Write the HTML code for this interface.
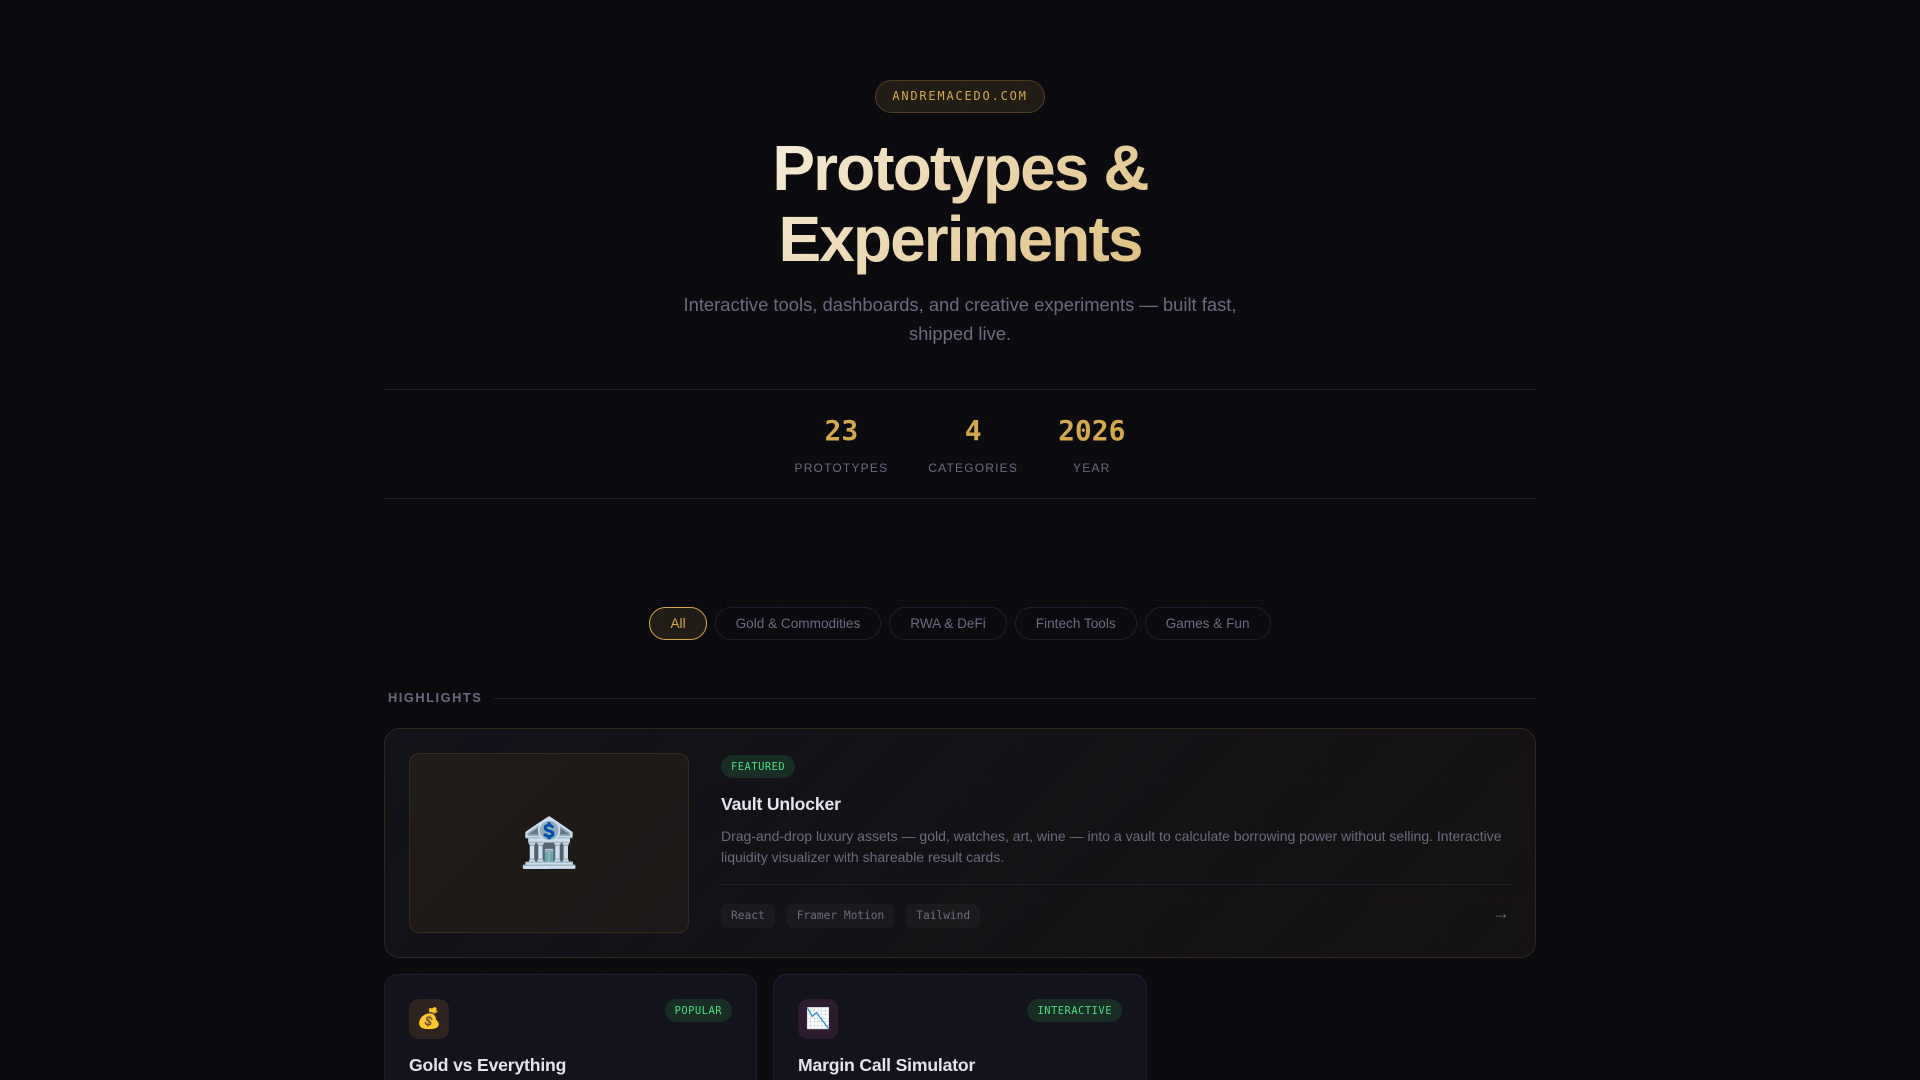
<!DOCTYPE html>
<html lang="en"><head><meta charset="utf-8"><title>Prototypes &amp; Experiments</title>
<style>
*{box-sizing:border-box;margin:0;padding:0}
html,body{width:1920px;height:1080px;overflow:hidden;background:#0a0a0f}
body{font-family:"Liberation Sans",sans-serif;color:#e8e8f0;position:relative;line-height:1.6}
.grid{position:absolute;inset:0;background-image:linear-gradient(rgba(212,168,75,.025) 1px,transparent 1px),linear-gradient(90deg,rgba(212,168,75,.025) 1px,transparent 1px);background-size:60px 60px}
.a{position:absolute}
.mono{font-family:"DejaVu Sans Mono",monospace}
.badge{left:875px;top:80px;width:170px;height:33px;border:1px solid rgba(212,168,75,.25);background:rgba(212,168,75,.12);border-radius:100px;color:#d4a84b;font-size:12px;letter-spacing:.15em;text-align:center;line-height:31px;white-space:nowrap}
h1{left:384px;top:133px;width:1152px;text-align:center;font-size:64px;line-height:71px;font-weight:700;letter-spacing:-.03em}
h1 span{display:inline-block;background:linear-gradient(135deg,#f5ecd7,#e0c080);-webkit-background-clip:text;background-clip:text;color:transparent;width:376px;white-space:normal}
.sub{left:660px;top:290px;width:600px;text-align:center;font-size:18.4px;line-height:29.44px;color:#6b6b80}
.hr{left:384px;width:1152px;height:1px;background:#1e1e2e}
.stats{left:384px;top:414px;width:1152px;display:flex;justify-content:center;gap:40px;text-align:center}
.num{font-family:"DejaVu Sans Mono",monospace;font-weight:700;font-size:28px;line-height:34px;color:#d4a84b}
.lab{font-size:12px;letter-spacing:.1em;color:#6b6b80;line-height:19px;margin-top:11px}
.filters{left:384px;top:607px;width:1152px;display:flex;justify-content:center;gap:8px}
.f{height:33px;padding:0 20px;border:1px solid #1e1e2e;border-radius:100px;font-size:13.6px;line-height:31px;color:#6b6b80;white-space:nowrap}
.f.on{border-color:#d4a84b;background:rgba(212,168,75,.12);color:#d4a84b}
.hl{left:388px;top:688px;font-size:12.8px;font-weight:700;letter-spacing:.12em;color:#6b6b80;line-height:20px}
.feat{left:384px;top:728px;width:1152px;height:230px;border:1px solid rgba(212,168,75,.15);border-radius:16px;background:linear-gradient(135deg,#12121a,rgba(212,168,75,.05))}
.thumb{left:409px;top:753px;width:280px;height:180px;border:1px solid rgba(212,168,75,.13);border-radius:10px;background:linear-gradient(135deg,#211c19,#1c1817);text-align:center;font-size:48px;line-height:180px}
.tag{height:23px;padding:0 10px;border-radius:100px;background:#182d24;color:#4ade80;font-size:10.4px;letter-spacing:.05em;line-height:24px;white-space:nowrap}
.t{font-size:17.6px;font-weight:700;color:#e4e4ee;line-height:28px;white-space:nowrap;letter-spacing:-.01em}
.desc{left:721px;top:825.5px;width:791px;font-size:14px;line-height:21px;color:#6b6b80}
.div{left:721px;top:884px;width:791px;height:1px;background:#1e1e2e}
.chips{left:721px;top:904px;display:flex;gap:12px}
.chip{height:24px;padding:0 10px;border-radius:6px;background:rgba(255,255,255,.035);font-size:11.2px;line-height:24px;color:#6b6b80;white-space:nowrap}
.arrow{left:1491px;top:899px;width:20px;text-align:center;font-size:17.6px;line-height:28px;color:#6b6b80}
.card{top:974px;width:373.33px;height:200px;background:#12131c;border:1px solid #1e1e2e;border-radius:14px}
.ico{top:999px;width:40px;height:40px;border-radius:10px;text-align:center;font-size:20px;line-height:40px}
</style></head><body>
<div class="a grid"></div>
<div class="a badge mono">ANDREMACEDO.COM</div>
<h1 class="a"><span>Prototypes &amp; Experiments</span></h1>
<p class="a sub">Interactive tools, dashboards, and creative experiments — built fast, shipped live.</p>
<div class="a hr" style="top:389px"></div>
<div class="a stats">
<div><div class="num">23</div><div class="lab">PROTOTYPES</div></div>
<div><div class="num">4</div><div class="lab">CATEGORIES</div></div>
<div><div class="num">2026</div><div class="lab">YEAR</div></div>
</div>
<div class="a hr" style="top:498px"></div>
<div class="a filters">
<div class="f on">All</div><div class="f">Gold &amp; Commodities</div><div class="f">RWA &amp; DeFi</div><div class="f">Fintech Tools</div><div class="f">Games &amp; Fun</div>
</div>
<div class="a hl">HIGHLIGHTS</div>
<div class="a" style="left:494px;top:698px;width:1042px;height:1px;background:#1e1e2e"></div>
<div class="a feat"></div>
<div class="a thumb">🏦</div>
<div class="a tag mono" style="left:721px;top:755px">FEATURED</div>
<div class="a t" style="left:721px;top:790px">Vault Unlocker</div>
<p class="a desc">Drag-and-drop luxury assets — gold, watches, art, wine — into a vault to calculate borrowing power without selling. Interactive liquidity visualizer with shareable result cards.</p>
<div class="a div"></div>
<div class="a chips mono"><div class="chip">React</div><div class="chip">Framer Motion</div><div class="chip">Tailwind</div></div>
<div class="a arrow">→</div>
<div class="a card" style="left:384px"></div>
<div class="a ico" style="left:409px;background:#2e231e">💰</div>
<div class="a tag mono" style="right:1188px;top:999px">POPULAR</div>
<div class="a t" style="left:409px;top:1051px">Gold vs Everything</div>
<div class="a card" style="left:773.33px"></div>
<div class="a ico" style="left:798px;background:#2d1c2e">📉</div>
<div class="a tag mono" style="right:798px;top:999px">INTERACTIVE</div>
<div class="a t" style="left:798px;top:1051px">Margin Call Simulator</div>
</body></html>
